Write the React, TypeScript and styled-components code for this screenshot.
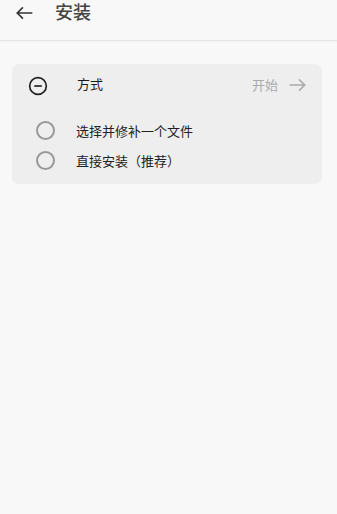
import type { FC } from 'react';
import styled, { createGlobalStyle } from 'styled-components';

const GlobalStyle = createGlobalStyle`
  * {
    margin: 0;
    padding: 0;
    box-sizing: border-box;
  }

  body {
    font-family: Roboto, 'Noto Sans CJK SC', sans-serif;
    background: #f8f8f8;
    color: #222;
  }
`;

const Page = styled.div`
  min-height: 100vh;
  background: #f8f8f8;
`;

const TopBar = styled.header`
  height: 41px;
  display: flex;
  align-items: center;
  padding: 0 0 14px 13px;
  border-bottom: 1px solid #e6e6e6;
  box-shadow: 0 1px 2px rgba(0, 0, 0, 0.04);
`;

const BackButton = styled.button`
  width: 22px;
  height: 22px;
  display: flex;
  align-items: center;
  justify-content: center;
  background: none;
  border: none;
  color: #333;
  margin-right: 20px;
`;

const Title = styled.h1`
  font-size: 18px;
  font-weight: 500;
  color: #444;
  line-height: 1;
`;

const Card = styled.section`
  margin: 23px 15px 0 12px;
  background: #eeeeee;
  border-radius: 7px;
  padding: 12px 0 14px;
`;

const HeadRow = styled.div`
  display: flex;
  align-items: center;
  height: 20px;
  padding: 0 14px 0 16px;
  margin-bottom: 25px;
`;

const Label = styled.span`
  font-size: 13px;
  font-weight: 400;
  line-height: 1;
  padding-bottom: 3px;
  color: #1a1a1a;
  margin-left: 29px;
  flex: 1;
`;

const Start = styled.span`
  display: flex;
  align-items: center;
  gap: 10px;
  font-size: 13px;
  line-height: 1;
  padding-bottom: 2px;
  color: #aaa;
`;

const Options = styled.div`
  display: flex;
  flex-direction: column;
  gap: 11px;
`;

const Option = styled.label`
  display: flex;
  align-items: center;
  height: 19px;
  padding-left: 24px;
  font-size: 13px;
  color: #222;
`;

const Radio = styled.span`
  width: 19px;
  height: 19px;
  border-radius: 50%;
  border: 2px solid #999;
  margin-right: 21px;
`;

const App: FC = () => {
  return (
    <Page>
      <GlobalStyle />
      <TopBar>
        <BackButton aria-label="back">
          <svg width="20" height="20" viewBox="0 0 24 24" fill="none" stroke="#333" strokeWidth="2" strokeLinecap="square">
            <path d="M21 12H4M10 6l-6 6 6 6" />
          </svg>
        </BackButton>
        <Title>安装</Title>
      </TopBar>
      <Card>
        <HeadRow>
          <svg width="20" height="20" viewBox="0 0 24 24" fill="none" stroke="#222" strokeWidth="2">
            <circle cx="12" cy="12" r="10" />
            <path d="M7.5 12h9" />
          </svg>
          <Label>方式</Label>
          <Start>
            开始
            <svg width="20" height="20" viewBox="0 0 24 24" fill="none" stroke="#aaa" strokeWidth="2" strokeLinecap="square">
              <path d="M3 12h17M14 6l6 6-6 6" />
            </svg>
          </Start>
        </HeadRow>
        <Options>
          <Option>
            <Radio />
            选择并修补一个文件
          </Option>
          <Option>
            <Radio />
            直接安装（推荐）
          </Option>
        </Options>
      </Card>
    </Page>
  );
};

export default App;
